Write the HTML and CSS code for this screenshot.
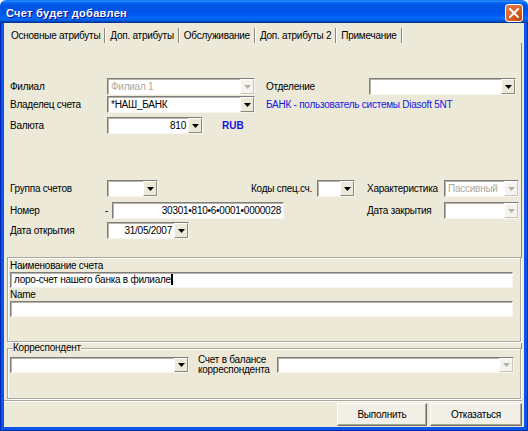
FILE: index.html
```html
<!DOCTYPE html>
<html lang="ru">
<head>
<meta charset="utf-8">
<title>Счет будет добавлен</title>
<link rel="stylesheet" href="styles.css">
</head>
<body>
<div class="window">
  <div class="titlebar">
    <span class="title">Счет будет добавлен</span>
    <span class="close"><svg width="10" height="10" viewBox="0 0 10 10"><path d="M1 1 L9 9 M9 1 L1 9" stroke="#fff" stroke-width="2" stroke-linecap="square"/></svg></span>
  </div>
  <div class="frame">
    <div class="client">
      <div class="tabs">
        <span class="tab active">Основные атрибуты</span>
        <span class="tab">Доп. атрибуты</span>
        <span class="tab">Обслуживание</span>
        <span class="tab">Доп. атрибуты 2</span>
        <span class="tab">Примечание</span>
      </div>
      <div class="page">
        <div class="row r1">
          <span class="lbl w97">Филиал</span>
          <div class="combo disabled w148"><span class="val">Филиал 1</span><span class="arrow"><svg width="7" height="4" viewBox="0 0 7 4"><path d="M0 0H7L3.5 4Z"/></svg></span></div>
          <span class="lbl ml11 w103">Отделение</span>
          <div class="combo w147"><span class="val"></span><span class="arrow"><svg width="7" height="4" viewBox="0 0 7 4"><path d="M0 0H7L3.5 4Z"/></svg></span></div>
        </div>
        <div class="row r2">
          <span class="lbl w97">Владелец счета</span>
          <div class="combo w148"><span class="val">*НАШ_БАНК</span><span class="arrow"><svg width="7" height="4" viewBox="0 0 7 4"><path d="M0 0H7L3.5 4Z"/></svg></span></div>
          <span class="info ml11">БАНК - пользователь системы Diasoft 5NT</span>
        </div>
        <div class="row r3">
          <span class="lbl w97">Валюта</span>
          <div class="combo w96"><span class="val right">810</span><span class="arrow"><svg width="7" height="4" viewBox="0 0 7 4"><path d="M0 0H7L3.5 4Z"/></svg></span></div>
          <span class="info ml19 bold">RUB</span>
        </div>
        <div class="row r4">
          <span class="lbl w97">Группа счетов</span>
          <div class="combo w51"><span class="val"></span><span class="arrow"><svg width="7" height="4" viewBox="0 0 7 4"><path d="M0 0H7L3.5 4Z"/></svg></span></div>
          <span class="lbl ml93 w66">Коды спец.сч.</span>
          <div class="combo w38"><span class="val"></span><span class="arrow"><svg width="7" height="4" viewBox="0 0 7 4"><path d="M0 0H7L3.5 4Z"/></svg></span></div>
          <span class="lbl ml12 w77">Характеристика</span>
          <div class="combo disabled w75"><span class="val">Пассивный</span><span class="arrow"><svg width="7" height="4" viewBox="0 0 7 4"><path d="M0 0H7L3.5 4Z"/></svg></span></div>
        </div>
        <div class="row r5">
          <span class="lbl w95">Номер</span>
          <span class="dash">-</span>
          <div class="combo w172"><span class="val right">30301•810•6•0001•0000028</span></div>
          <span class="lbl ml83 w77">Дата закрытия</span>
          <div class="combo disabled w75"><span class="val"></span><span class="arrow"><svg width="7" height="4" viewBox="0 0 7 4"><path d="M0 0H7L3.5 4Z"/></svg></span></div>
        </div>
        <div class="row r6">
          <span class="lbl w97">Дата открытия</span>
          <div class="combo w82"><span class="val right">31/05/2007</span><span class="arrow"><svg width="7" height="4" viewBox="0 0 7 4"><path d="M0 0H7L3.5 4Z"/></svg></span></div>
        </div>

        <div class="namebox">
          <div class="glbl">Наименование счета</div>
          <div class="combo wide tall16"><span class="val">лоро-счет нашего банка в филиале<span class="caret"></span></span></div>
          <div class="glbl">Name</div>
          <div class="combo wide"><span class="val"></span></div>
        </div>

        <fieldset class="corr">
          <legend>Корреспондент</legend>
          <div class="corr-row">
            <div class="combo w179"><span class="val"></span><span class="arrow"><svg width="7" height="4" viewBox="0 0 7 4"><path d="M0 0H7L3.5 4Z"/></svg></span></div>
            <span class="lbl2">Счет в балансе<br>корреспондента</span>
            <div class="combo disabled w237"><span class="val"></span><span class="arrow"><svg width="7" height="4" viewBox="0 0 7 4"><path d="M0 0H7L3.5 4Z"/></svg></span></div>
          </div>
        </fieldset>
      </div>
      <div class="buttons">
        <button class="btn w90">Выполнить</button>
        <button class="btn w92">Отказаться</button>
      </div>
    </div>
  </div>
</div>
</body>
</html>
```
FILE: styles.css
```css
* { box-sizing: border-box; }
html, body { margin: 0; padding: 0; }
body {
  width: 528px;
  height: 431px;
  overflow: hidden;
  background: #ffffff;
  font-family: "Liberation Sans", Arial, sans-serif;
  font-size: 10px;
  letter-spacing: -0.25px;
  color: #000;
}
.window {
  width: 528px;
  height: 431px;
  display: flex;
  flex-direction: column;
}
.titlebar {
  height: 23px;
  flex: none;
  display: flex;
  align-items: center;
  justify-content: space-between;
  padding: 0 5px 0 6px;
  border-radius: 6px 6px 0 0;
  background: linear-gradient(#0058ee 0%, #3593ff 4%, #288eff 6%, #127dff 8%, #036ffc 10%, #0262ee 14%, #0057e5 20%, #0054e3 24%, #0055eb 56%, #005bf5 66%, #026afe 76%, #0062ef 86%, #0052d6 92%, #0040ab 94%, #003092 100%);
}
.title {
  color: #fff;
  font-weight: bold;
  font-size: 11px;
  letter-spacing: 0.3px;
  text-shadow: 1px 1px #0f1089;
  margin-top: 2px;
}
.close {
  width: 18px;
  height: 18px;
  margin-top: 2px;
  border: 1px solid #fff;
  border-radius: 3px;
  display: flex;
  align-items: center;
  justify-content: center;
  background: radial-gradient(circle at 80% 85%, #cc4600 0%, #dc6527 55%, #e5805a 100%);
}
.frame {
  flex: 1;
  display: flex;
  padding: 0 4px 4px 4px;
  background: #0a55e6;
  box-shadow: inset 1px 0 #0027b8, inset -1px 0 #0027b8, inset 0 -1px #0027b8;
}
.client {
  flex: 1;
  display: flex;
  flex-direction: column;
  background: #ece9d8;
}
.tabs {
  height: 20px;
  flex: none;
  display: flex;
  padding: 5px 0 0 3px;
}
.tab {
  height: 15px;
  line-height: 15px;
  padding: 0 4px;
  margin-right: 1px;
  border-right: 1px solid #8a8778;
  box-shadow: 1px 0 #fff;
  white-space: nowrap;
}
.page {
  height: 358px;
  flex: none;
  margin-right: 2px;
  padding-left: 3px;
  border-right: 1px solid #8a8778;
  border-bottom: 1px solid #aca899;
  box-shadow: 0 1px #fff;
  display: flex;
  flex-direction: column;
}
.row {
  display: flex;
  align-items: center;
  height: 17px;
  padding-left: 3px;
  flex: none;
}
.r1 { margin-top: 35px; }
.r2 { margin-top: 1px; }
.r3 { margin-top: 4px; }
.r4 { margin-top: 46px; }
.r5 { margin-top: 5px; }
.r6 { margin-top: 3px; }

.lbl { white-space: nowrap; flex: none; }
.info { color: #1515e6; white-space: nowrap; }
.bold { font-weight: bold; letter-spacing: 0; }
.dash { width: 7px; flex: none; }

.w38 { width: 38px; } .w51 { width: 51px; } .w66 { width: 66px; }
.w75 { width: 75px; } .w77 { width: 77px; } .w82 { width: 82px; }
.w95 { width: 95px; } .w96 { width: 96px; } .w97 { width: 97px; }
.w103 { width: 103px; } .w147 { width: 147px; } .w148 { width: 148px; }
.w172 { width: 172px; } .w179 { width: 179px; } .w237 { width: 237px; }
.w90 { width: 90px; } .w92 { width: 92px; }
.ml11 { margin-left: 11px; } .ml12 { margin-left: 12px; } .ml19 { margin-left: 19px; }
.ml83 { margin-left: 83px; } .ml93 { margin-left: 93px; }

.combo {
  flex: none;
  height: 17px;
  display: flex;
  background: #fff;
  border: 1px solid;
  border-color: #7d7d7d #f6f5f0 #f6f5f0 #7d7d7d;
  box-shadow: inset 1px 1px #b8b5a8;
}
.combo .val {
  flex: 1;
  min-width: 0;
  padding: 0 3px 0 3px;
  line-height: 15px;
  white-space: nowrap;
  overflow: hidden;
}
.combo .val.right { text-align: right; padding-right: 2px; }
.combo.disabled .val { color: #aca899; }
.arrow {
  flex: none;
  width: 14px;
  height: 15px;
  background: #ece9d8;
  border: 1px solid;
  border-color: #fdfdfb #8d8a7c #8d8a7c #fdfdfb;
  display: flex;
  align-items: center;
  justify-content: center;
}
.arrow svg { fill: #000; }
.combo.disabled .arrow { background: #f4f3ee; border-color: #fff #c8c5b8 #c8c5b8 #fff; }
.combo.disabled .arrow svg { fill: #b5b2a4; }
.caret {
  display: inline-block;
  width: 2px;
  height: 11px;
  background: #000;
  vertical-align: -2px;
  margin-left: 0;
}

.namebox {
  margin-top: 18px;
  height: 85px;
  flex: none;
  border: 1px solid #aca899;
  box-shadow: inset 1px 1px #fff, 1px 1px #fff;
  padding: 1px 7px 0 2px;
  display: flex;
  flex-direction: column;
}
.glbl { height: 13px; line-height: 13px; flex: none; }
.combo.wide { width: 503px; height: 16px; }
.combo.wide .val { line-height: 14px; }

.corr {
  margin: 0;
  padding: 0 0 0 2px;
  height: 57px;
  min-width: 0;
  flex: none;
  border: 1px solid #aca899;
  box-shadow: inset 1px 1px #fff, 1px 1px #fff;
}
.corr legend {
  padding: 0;
  margin-left: 3px;
  line-height: 12px;
}
.corr-row {
  display: flex;
  align-items: center;
  margin-top: 1px;
}
.corr-row .combo { height: 16px; }
.corr-row .arrow { height: 14px; }
.corr-row .val { line-height: 14px; }
.lbl2 {
  width: 79px;
  margin-left: 9px;
  line-height: 10px;
  white-space: nowrap;
  flex: none;
}

.buttons {
  flex: 1;
  display: flex;
  justify-content: flex-end;
  align-items: flex-start;
  gap: 3px;
  padding: 2px 2px 0 0;
}
.btn {
  height: 23px;
  font-family: "Liberation Sans", Arial, sans-serif;
  font-size: 10px;
  letter-spacing: -0.25px;
  color: #000;
  background: #f1efe6;
  border: 1px solid;
  border-color: #fff #6f6c60 #6f6c60 #fff;
  box-shadow: inset -1px -1px #aca899;
  padding: 0;
}
```
